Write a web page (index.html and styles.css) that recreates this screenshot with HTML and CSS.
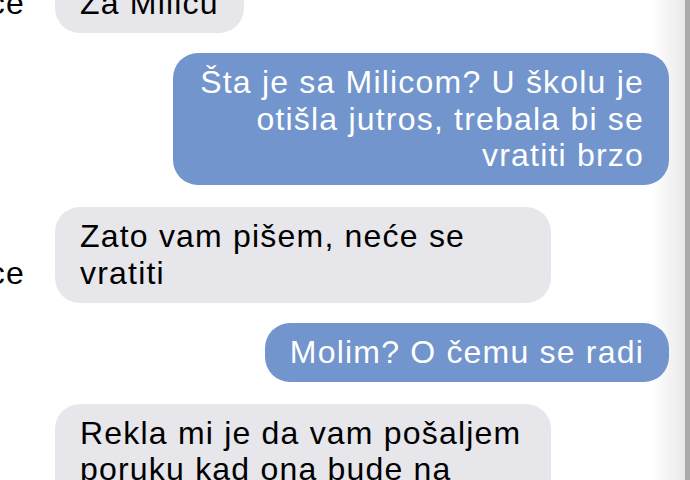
FILE: index.html
```html
<!doctype html>
<html lang="sr">
  <head>
    <meta charset="UTF-8" />
    <title>Poruke</title>
    <link rel="stylesheet" href="styles.css">
  </head>
  <body>
    <div class="chat-window">
      <div class="chat">
        <div class="row incoming first">
          <div class="sender"><span>Otmičar Milice</span></div>
          <div class="bubble">Za Milicu</div>
        </div>

        <div class="row outgoing">
          <div class="bubble">Šta je sa Milicom? U školu je otišla jutros, trebala bi se vratiti brzo</div>
        </div>

        <div class="row incoming">
          <div class="sender"><span>Otmičar Milice</span></div>
          <div class="bubble">Zato vam pišem, neće se vratiti</div>
        </div>

        <div class="row outgoing">
          <div class="bubble">Molim? O čemu se radi</div>
        </div>

        <div class="row incoming">
          <div class="sender"><span>Otmičar Milice</span></div>
          <div class="bubble">Rekla mi je da vam pošaljem poruku kad ona bude na sigurnom mestu</div>
        </div>
      </div>
    </div>
  </body>
</html>
```

FILE: styles.css
```css
html,
body {
  margin: 0;
  height: 100%;
  overflow: hidden;
}

body {
  font-family: "Liberation Sans", Arial, sans-serif;
  background: #fff;
}

.chat-window {
  height: 100%;
  border-right: 5px solid #ababab;
  background: linear-gradient(to right, #fff calc(100% - 34px), #e9e9e9);
  overflow: hidden;
}

.chat {
  display: flex;
  flex-direction: column;
  padding-right: 16px;
}

.row {
  display: flex;
  align-items: last baseline;
}

.incoming {
  margin-top: 22px;
}

.outgoing {
  margin-top: 20px;
  justify-content: flex-end;
}

.row.first {
  margin-top: -26px;
}

.sender {
  width: 25px;
  margin-right: 30px;
  display: flex;
  justify-content: flex-end;
  overflow: hidden;
  white-space: nowrap;
  font-size: 32px;
  letter-spacing: 1.2px;
  color: #000;
}

.bubble {
  max-width: 496px;
  box-sizing: border-box;
  padding: 11px 25px;
  border-radius: 25px;
  font-size: 32px;
  letter-spacing: 1.2px;
  line-height: 36.8px;
}

.incoming .bubble {
  background: #e6e6eb;
  color: #000;
}

.outgoing .bubble {
  background: #7195cc;
  color: #fff;
  text-align: right;
}
```
